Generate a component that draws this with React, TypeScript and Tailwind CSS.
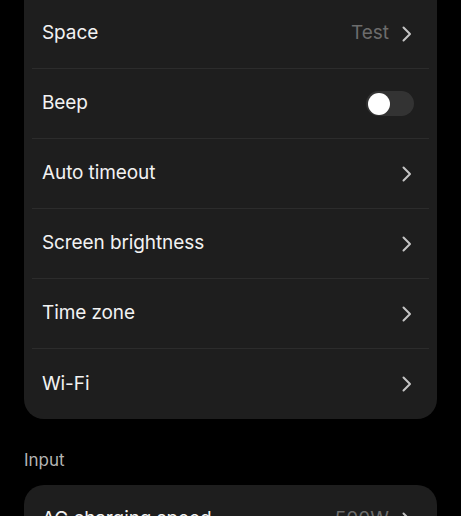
import React from 'react'

type Row = {
  label: string
  value?: string
  toggle?: boolean
}

const deviceRows: Row[] = [
  { label: 'Space', value: 'Test' },
  { label: 'Beep', toggle: true },
  { label: 'Auto timeout' },
  { label: 'Screen brightness' },
  { label: 'Time zone' },
  { label: 'Wi-Fi' },
]

function Chevron() {
  return (
    <svg width="14" height="18" viewBox="0 0 14 18" fill="none" className="shrink-0">
      <polyline
        points="3.5,2.5 10,9 3.5,15.5"
        stroke="#c4c4c4"
        strokeWidth="2"
        strokeLinecap="round"
        strokeLinejoin="round"
      />
    </svg>
  )
}

function Toggle() {
  return (
    <div className="w-[48px] h-[25px] rounded-full bg-[#333333] flex items-center px-[1.5px]">
      <div className="w-[22px] h-[22px] rounded-full bg-white" />
    </div>
  )
}

function SettingRow({ row, last }: { row: Row; last: boolean }) {
  return (
    <div
      className={`h-[70px] flex items-center justify-between pl-[10px] pr-[15px] ${
        last ? '' : 'border-b border-[#2c2c2c]'
      }`}
    >
      <span className="text-[19px] text-[#f2f2f2] tracking-[-0.1px]">{row.label}</span>
      {row.toggle ? (
        <Toggle />
      ) : (
        <div className="flex items-center gap-[11px]">
          {row.value && <span className="text-[19px] text-[#6c6c6c]">{row.value}</span>}
          <Chevron />
        </div>
      )}
    </div>
  )
}

export default function App() {
  return (
    <div
      className="min-h-screen bg-black px-[24px] overflow-hidden"
      style={{ fontFamily: 'Inter, "Noto Sans", sans-serif' }}
    >
      <div className="-mt-[19px] pt-[18px] bg-[#1e1e1e] rounded-[20px] px-[8px]">
        {deviceRows.map((row, i) => (
          <SettingRow key={row.label} row={row} last={i === deviceRows.length - 1} />
        ))}
      </div>

      <div className="mt-[29px] mb-[13px] text-[17px] leading-[24px] text-[#b4b4b4]">Input</div>

      <div className="bg-[#1e1e1e] rounded-[20px] px-[8px]">
        <SettingRow row={{ label: 'AC charging speed', value: '500W' }} last={false} />
        <SettingRow row={{ label: 'Solar input', value: '800W' }} last={true} />
      </div>
    </div>
  )
}
